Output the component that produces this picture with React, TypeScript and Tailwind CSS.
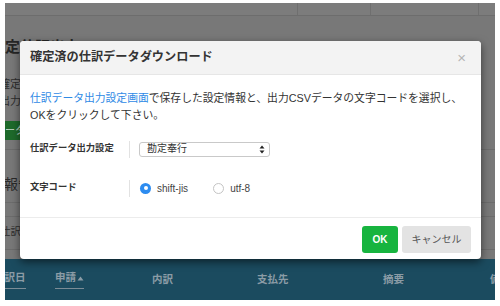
import React from "react";

const FONT = { fontFamily: '"Liberation Sans", "Noto Sans CJK JP", sans-serif' };

const columns = [
  { label: "仕訳日", width: "w-[61px]", sort: true, first: true },
  { label: "申請", width: "w-[97px]", sort: true, arrow: true },
  { label: "内訳", width: "w-[105px]" },
  { label: "支払先", width: "w-[126px]" },
  { label: "摘要", width: "w-[107px]" },
  { label: "備考", width: "w-[60px]" },
];

function DownloadModal() {
  return (
    <div className="absolute left-[15px] top-[38px] w-[461px] h-[218px] flex flex-col rounded-[4px] bg-white shadow-[0_3px_9px_rgba(0,0,0,0.55)] overflow-hidden">
      {/* Header */}
      <div className="h-[34px] flex items-center justify-between pl-[10px] pr-[15px] bg-[#f3f3f3] border-b border-[#e6e6e6]">
        <h2 className="text-[12.2px] font-bold text-[#333]">確定済の仕訳データダウンロード</h2>
        <span className="text-[15px] leading-none text-[#b5b5b5]">×</span>
      </div>

      {/* Body */}
      <div className="flex-1 px-[10px] pt-[15px]">
        <p className="text-[10.8px] leading-[17px] text-[#333]">
          <span className="text-[#2f8ae5]">仕訳データ出力設定画面</span>
          で保存した設定情報と、出力CSVデータの文字コードを選択し、
          <br />
          OKをクリックして下さい。
        </p>

        <div className="mt-[13px] flex items-center h-[24px]">
          <div className="w-[99px] text-[9.3px] font-bold text-[#333]">仕訳データ出力設定</div>
          <div className="h-[17px] border-l border-[#e2e2e2]" />
          <div className="ml-[9px] w-[131px] h-[15px] flex items-center justify-between pl-[7px] pr-[4px] rounded-[3px] border border-[#c9c9c9] bg-white">
            <span className="text-[10px] text-[#333] leading-none">勘定奉行</span>
            <svg width="6" height="9" viewBox="0 0 6 9">
              <path d="M3 0.5 L5.5 3.5 H0.5 Z" fill="#222" />
              <path d="M3 8.5 L5.5 5.5 H0.5 Z" fill="#222" />
            </svg>
          </div>
        </div>

        <div className="mt-[15px] flex items-center h-[24px]">
          <div className="w-[99px] text-[9.3px] font-bold text-[#333]">文字コード</div>
          <div className="h-[17px] border-l border-[#e2e2e2]" />
          <div className="ml-[10px] flex items-center">
            <span className="w-[11px] h-[11px] rounded-full bg-[#2d8cf0] flex items-center justify-center">
              <span className="w-[4px] h-[4px] rounded-full bg-white" />
            </span>
            <span className="ml-[6px] text-[10px] text-[#444]">shift-jis</span>
            <span className="ml-[25px] w-[11px] h-[11px] rounded-full border border-[#c4c4c4] bg-white" />
            <span className="ml-[6px] text-[10px] text-[#444]">utf-8</span>
          </div>
        </div>
      </div>

      {/* Footer */}
      <div className="h-[42px] flex items-start justify-end gap-[4px] pt-[8px] pr-[10px] border-t border-[#ececec]">
        <button className="w-[36px] h-[27px] rounded-[3px] bg-[#17b43f] text-white text-[10px] font-bold">OK</button>
        <button className="w-[69px] h-[27px] rounded-[3px] bg-[#e3e3e3] text-[#555] text-[10px]">キャンセル</button>
      </div>
    </div>
  );
}

export default function App() {
  return (
    <div className="w-[500px] h-[306px] bg-white pt-[3px] pl-[5px]" style={FONT}>
      <div className="relative w-[490px] h-[297px] overflow-hidden bg-[#787878] flex flex-col">
        {/* Top bar */}
        <div className="h-[13px] flex border-b border-[#6d6d6d] bg-[#7c7c7c]">
          <div className="w-[292px]" />
          <div className="w-[73px] border-l border-[#6f6f6f]" />
          <div className="w-[108px] border-l border-[#6f6f6f]" />
          <div className="flex-1 border-l border-[#6f6f6f]" />
        </div>

        {/* Page content under the overlay */}
        <div className="flex-1 overflow-hidden">
          <h1 className="-ml-[15px] mt-[21px] text-[15px] leading-[20px] font-bold text-[#262626]">確定仕訳出力</h1>
          <p className="-ml-[6px] mt-[19px] text-[11px] leading-[17px] text-[#2e2e2e]">
            確定済の仕訳を出力
            <br />
            出力設定
          </p>
          <div className="-ml-[10px] mt-[11px] w-[120px] h-[19px] flex items-center bg-[#1e6a2b] text-[10px] text-[#c9d9cc]">
            データ出力
          </div>
          <div className="mt-[9px] border-t border-[#6c6c6c]" />
          <h3 className="-ml-[1px] mt-[24px] text-[14px] leading-[20px] text-[#2a2a2a]">報告</h3>
          <div className="mt-[8px] border-t border-[#6c6c6c]" />
          <div className="mt-[13px] border-t border-[#6c6c6c]" />
          <p className="-ml-[5px] mt-[6px] text-[10.5px] leading-[16px] text-[#2e2e2e]">仕訳一覧</p>
          <div className="mt-[10px] border-t border-[#6c6c6c]" />
        </div>

        {/* Table header */}
        <div className="h-[41px] shrink-0 flex items-center bg-[#1b4b5f] text-[10.5px] font-bold text-[#8b9ca6]">
          {columns.map((c) => (
            <div key={c.label} className={`${c.width} shrink-0 ${c.first ? "-ml-[11px]" : ""}`}>
              <span className={c.sort ? "inline-flex items-center border-b border-[#7b8c96] pb-[2px]" : ""}>
                {c.label}
                {c.arrow && (
                  <svg width="7" height="5" viewBox="0 0 7 5" className="ml-[1px]">
                    <path d="M3.5 0.5 L6.5 4.5 H0.5 Z" fill="#8b9ca6" />
                  </svg>
                )}
              </span>
            </div>
          ))}
        </div>

        <DownloadModal />
      </div>
    </div>
  );
}
